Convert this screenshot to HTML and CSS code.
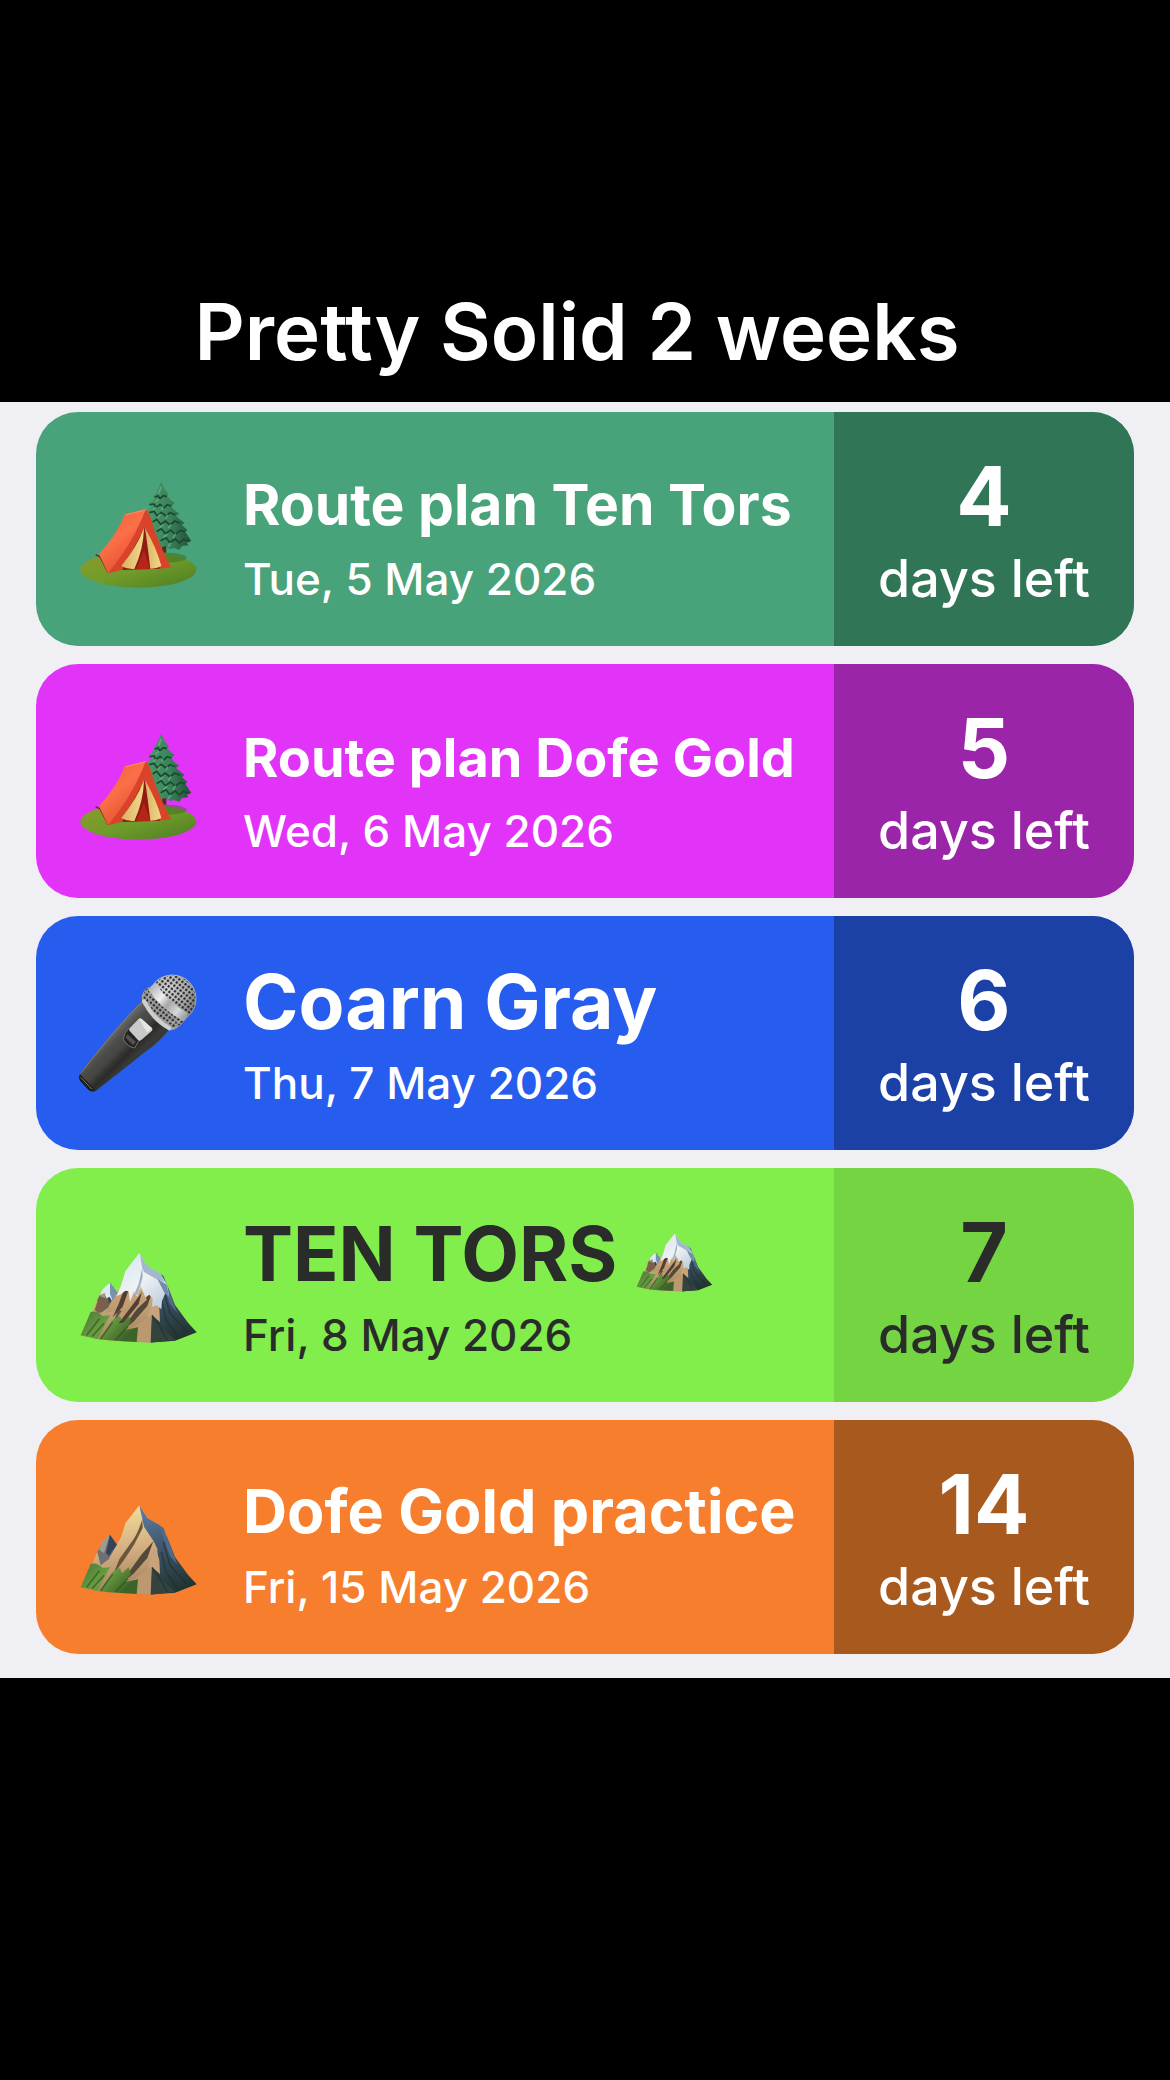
FILE: index.html
```
<!DOCTYPE html>
<html lang="en">

<head>
  <meta charset="UTF-8">
  <meta name="viewport" content="width=device-width, initial-scale=1">
  <title>Pretty Solid 2 weeks</title>
  <link rel="stylesheet" href="styles.css">
</head>

<body>

  <!-- shared icon shapes -->
  <svg class="sprite" width="0" height="0" aria-hidden="true">
    <defs>
      <linearGradient id="grass" x1="0" y1="0" x2="1" y2="1">
        <stop offset="0" stop-color="#8f9a2c"/>
        <stop offset=".5" stop-color="#6f9c2a"/>
        <stop offset="1" stop-color="#4d7d22"/>
      </linearGradient>
      <linearGradient id="canvas" x1="0" y1="0" x2=".6" y2="1">
        <stop offset="0" stop-color="#ee5a34"/>
        <stop offset=".5" stop-color="#fb7049"/>
        <stop offset="1" stop-color="#e24a2a"/>
      </linearGradient>
      <linearGradient id="flap" x1="0" y1="0" x2="1" y2="0">
        <stop offset="0" stop-color="#d9b262"/>
        <stop offset="1" stop-color="#f3d98a"/>
      </linearGradient>
      <linearGradient id="fir" x1="0" y1="0" x2="1" y2="0">
        <stop offset="0" stop-color="#4c9a6b"/>
        <stop offset=".5" stop-color="#3a8359"/>
        <stop offset="1" stop-color="#1f4f38"/>
      </linearGradient>

      <linearGradient id="handle" gradientUnits="userSpaceOnUse" x1="145" y1="225" x2="215" y2="295">
        <stop offset="0" stop-color="#6b6b68"/>
        <stop offset=".3" stop-color="#4c4c4a"/>
        <stop offset=".55" stop-color="#454542"/>
        <stop offset=".8" stop-color="#2a2a29"/>
        <stop offset="1" stop-color="#383836"/>
      </linearGradient>
      <radialGradient id="grille" cx=".4" cy=".3" r=".75">
        <stop offset="0" stop-color="#d8d8d8"/>
        <stop offset=".6" stop-color="#a9a9a9"/>
        <stop offset="1" stop-color="#6d6d6d"/>
      </radialGradient>
      <linearGradient id="ring" gradientUnits="userSpaceOnUse" x1="275" y1="80" x2="385" y2="170">
        <stop offset="0" stop-color="#b5b5b5"/>
        <stop offset=".3" stop-color="#efefef"/>
        <stop offset=".5" stop-color="#a5a8a8"/>
        <stop offset=".75" stop-color="#d5d8d8"/>
        <stop offset="1" stop-color="#8f9292"/>
      </linearGradient>
      <pattern id="mesh" width="12" height="12" patternUnits="userSpaceOnUse" patternTransform="rotate(38)">
        <rect x="2" y="2" width="7" height="7" rx="2" fill="#2b2b2b"/>
      </pattern>

      <linearGradient id="rock" gradientUnits="userSpaceOnUse" x1="200" y1="80" x2="200" y2="335">
        <stop offset="0" stop-color="#d9b489"/>
        <stop offset=".55" stop-color="#c49d72"/>
        <stop offset="1" stop-color="#8d8a5a"/>
      </linearGradient>
      <linearGradient id="rockSun" gradientUnits="userSpaceOnUse" x1="200" y1="70" x2="240" y2="300">
        <stop offset="0" stop-color="#f3df98"/>
        <stop offset=".5" stop-color="#d8b384"/>
        <stop offset="1" stop-color="#a88a62"/>
      </linearGradient>
      <linearGradient id="shade" gradientUnits="userSpaceOnUse" x1="280" y1="90" x2="370" y2="320">
        <stop offset="0" stop-color="#58779a"/>
        <stop offset=".5" stop-color="#3c5163"/>
        <stop offset="1" stop-color="#20342f"/>
      </linearGradient>
      <linearGradient id="snow" gradientUnits="userSpaceOnUse" x1="200" y1="90" x2="300" y2="210">
        <stop offset="0" stop-color="#dbe9f1"/>
        <stop offset=".5" stop-color="#eef1f4"/>
        <stop offset="1" stop-color="#c6d4e1"/>
      </linearGradient>
      <linearGradient id="moss" gradientUnits="userSpaceOnUse" x1="80" y1="240" x2="180" y2="340">
        <stop offset="0" stop-color="#4f7a38"/>
        <stop offset=".5" stop-color="#6ba040"/>
        <stop offset="1" stop-color="#3d6428"/>
      </linearGradient>
    </defs>

    <symbol id="camping" viewBox="54 27 360 360">
      <ellipse cx="235" cy="329" rx="174" ry="54" fill="url(#grass)"/>
      <ellipse cx="318" cy="293" rx="62" ry="15" fill="#3c6a20" opacity=".5"/>
      <rect x="306" y="250" width="13" height="28" fill="#4b3426"/>
      <!-- tree -->
      <path fill="url(#fir)" d="M304 64L314 88L326 103L322 108L334 122L344 128L337 136L335 142L348 155L358 160L348 168L362 180L373 188L366 196L382 210L376 216L394 243L380 247L385 256L366 258L358 270L342 264L330 268L318 258L302 262L286 240L262 150L276 138L266 133L284 114L278 110L290 96Z"/>
      <g fill="none" stroke="#1c4532" stroke-width="5" stroke-linejoin="round">
        <path d="M284 112L294 107L300 116L310 107L320 110"/>
        <path d="M268 134L282 132L288 143L300 133L312 143L322 134L334 138"/>
        <path d="M268 158L282 154L292 168L304 157L318 168L330 158L346 164"/>
        <path d="M278 186L290 178L302 193L316 183L330 195L344 183L360 190"/>
        <path d="M290 215L304 206L316 221L332 210L346 223L360 211L374 216"/>
        <path d="M302 242L318 233L330 248L346 237L358 249L370 238L388 245"/>
      </g>
      <g fill="none" stroke="#65b186" stroke-width="5" stroke-linecap="round" opacity=".8">
        <path d="M303 82L297 99M288 124L296 119M280 148L288 143M306 148L308 140M294 172L300 164M318 174L322 166M300 202L308 196M326 203L332 195M312 231L320 224M340 232L346 223M326 258L332 250"/>
      </g>
      <!-- tent -->
      <path d="M107 284L120 290L145 338" fill="none" stroke="#6b3420" stroke-width="5"/>
      <path fill="url(#canvas)" d="M258 147L194 163Q172 222 117 283L144 340Q196 290 236 210Z"/>
      <path fill="#d8432a" d="M258 147L269 164Q290 240 333 322L300 326L253 204Q228 260 184 330L144 340Q210 260 244 180Z"/>
      <path fill="#8f1b14" d="M253 204L300 326L186 330Z"/>
      <path fill="#b52618" d="M252 270L270 326L228 328Z"/>
      <path fill="url(#flap)" d="M252 204Q230 262 184 318Q202 329 223 327Q250 270 252 204Z"/>
      <path fill="url(#flap)" d="M255 204Q290 265 304 318Q288 327 271 326Q264 265 255 204Z"/>
      <path fill="none" stroke="#ff9a70" stroke-width="3" opacity=".7" d="M258 149L196 165"/>
    </symbol>

    <symbol id="microphone" viewBox="54 39 360 360">
      <path fill="url(#handle)" d="M246 124L326 210Q300 245 250 280Q170 345 108 392Q98 398 86 390L60 362Q54 352 60 340Q120 260 192 180Q232 135 246 124Z"/>
      <path fill="none" stroke="#8a8a86" stroke-width="3" opacity=".7" d="M244 128Q180 190 62 340"/>
      <path fill="#1d1d1c" d="M60 343L106 391Q96 398 86 390L60 362Q54 352 60 343Z"/>
      <path fill="none" stroke="#777" stroke-width="3" d="M62 352L96 388"/>
      <path fill="#232323" stroke="#77756f" stroke-width="3" stroke-linejoin="round" d="M206 205L238 240L224 264Q204 262 190 238Q190 222 206 205Z"/>
      <path fill="#55504d" d="M202 222L228 246L219 255L197 233Z"/>
      <path fill="#c9c9c9" d="M236 176Q240 173 244 176L276 204Q279 208 276 212L243 241Q238 244 234 240L209 213Q206 209 209 205Z"/>
      <path fill="#e6e6e6" d="M237 176L244 176L276 205L262 218Z"/>
      <circle cx="337" cy="116" r="72" fill="url(#grille)"/>
      <circle cx="337" cy="116" r="70" fill="url(#mesh)"/>
      <path fill="#9d9d9d" d="M266 80Q238 98 248 130Q276 186 328 211Q352 212 378 176Z"/>
      <path fill="url(#mesh)" d="M266 80Q242 100 254 124Q290 176 334 202Q356 204 378 176Z"/>
      <path fill="url(#ring)" d="M288 70Q270 76 266 91Q300 145 371 184Q382 172 386 160Q324 130 288 70Z"/>
      <path fill="none" stroke="#cfd0d0" stroke-width="12" stroke-linecap="round" d="M252 124Q282 178 328 205"/>
      <circle cx="337" cy="116" r="71" fill="none" stroke="#bdbdbd" stroke-width="3" opacity=".6"/>
    </symbol>

    <!-- bare ridge, the snowy one draws over it -->
    <symbol id="ridge" viewBox="54 -15 360 360">
      <path fill="url(#rockSun)" d="M62 316L92 256L118 196Q124 178 150 158L170 188L184 164L196 124L238 70L262 108L300 130L322 166L345 225L385 280L410 307L345 332Q270 342 160 332L115 328Z"/>
      <path fill="#6d6f72" d="M150 158L170 188L146 232L122 250L112 210Q124 180 150 158Z"/>
      <path fill="#a09a8c" d="M150 158Q124 176 118 204L132 214Z"/>
      <path fill="#34435a" d="M150 158L171 188L146 222L138 212Z"/>
      <path fill="url(#shade)" d="M238 70L262 108L300 130L322 166L345 225L385 280L410 307L345 332L274 337L276 256L296 268L292 200L280 176L252 134Z"/>
      <path fill="#506a88" d="M296 128L311 138L320 164L352 248L330 222Z"/>
      <path fill="#6b553f" d="M247 112L248 138L222 188L196 228L172 262L160 276L178 232L212 184Q232 160 247 112Z"/>
      <path fill="#54483b" d="M280 178L262 228L222 274L166 322L158 322L200 280L244 218Z"/>
      <path fill="#c9a37a" d="M286 194L298 234L300 276L276 256L262 262L274 226Z"/>
      <path fill="#bb9870" d="M274 256L272 338L178 332L214 296Z"/>
      <path fill="#33443f" d="M276 256L308 296L346 330L272 338Z"/>
      <path fill="none" stroke="#1f2f33" stroke-width="5" opacity=".6" d="M310 180L330 250L380 304M304 210L318 270L354 322M276 256L300 290L322 330"/>
      <path fill="url(#moss)" d="M62 316L92 246Q110 240 128 258L150 256L112 327ZM118 328L160 268L180 258L186 274L206 256L212 276L196 300L234 292L230 336L150 331Z"/>
      <path fill="none" stroke="#2d4b23" stroke-width="5" opacity=".6" d="M80 316L118 266M122 326L158 276M166 330L204 290M96 320L132 280"/>
    </symbol>

    <symbol id="mountain" viewBox="54 -15 360 360">
      <use href="#ridge" x="54" y="-15" width="360" height="360"/>
      <path fill="#7a5f49" d="M118 198L146 208L146 230L116 250L104 240Z"/>
      <path fill="url(#rock)" d="M176 180L134 250L180 240L204 262L260 210L254 180Z"/>
      <path fill="#4f3f37" d="M206 180L188 230L158 262L176 222L190 184ZM246 186L236 222L190 278L176 280L218 224Z"/>
      <path fill="url(#snow)" d="M238 70L262 108L300 130L322 166L328 200L316 190L306 212L304 238L290 226L276 230L278 206L268 194L256 202L242 168L232 200L222 186L210 216L206 184L196 182L184 192L170 198L184 164L196 124Z"/>
      <path fill="#a3b8cb" d="M240 74L262 108L300 130L314 156L290 148L252 126L246 110Z"/>
      <path fill="#9bb0c4" d="M247 112L248 142L232 196L224 190L236 162Z"/>
      <path fill="#6f8dab" d="M292 146L320 164L328 200L314 190Z"/>
      <path fill="#dfe9f0" d="M150 158Q124 176 120 196L134 188L140 206L148 200L156 212L168 188Z"/>
      <path fill="#7592b5" d="M150 158L170 188L158 212L150 192Z"/>
    </symbol>
  </svg>

  <header class="page-header">
    <h1 class="page-header__title">Pretty Solid 2 weeks</h1>
  </header>

  <main class="countdowns">
    <ul class="countdowns__list">

      <li class="card card--green">
        <div class="card__body">
          <svg class="card__icon" aria-hidden="true"><use href="#camping"/></svg>
          <div class="card__text">
            <h2 class="card__title"><span class="card__name card__name--longer">Route plan Ten Tors</span></h2>
            <time class="card__date" datetime="2026-05-05">Tue, 5 May 2026</time>
          </div>
        </div>
        <div class="card__count">
          <span class="card__number">4</span>
          <span class="card__unit">days left</span>
        </div>
      </li>

      <li class="card card--pink">
        <div class="card__body">
          <svg class="card__icon" aria-hidden="true"><use href="#camping"/></svg>
          <div class="card__text">
            <h2 class="card__title"><span class="card__name card__name--longest">Route plan Dofe Gold</span></h2>
            <time class="card__date" datetime="2026-05-06">Wed, 6 May 2026</time>
          </div>
        </div>
        <div class="card__count">
          <span class="card__number">5</span>
          <span class="card__unit">days left</span>
        </div>
      </li>

      <li class="card card--blue">
        <div class="card__body">
          <svg class="card__icon" aria-hidden="true"><use href="#microphone"/></svg>
          <div class="card__text">
            <h2 class="card__title"><span class="card__name">Coarn Gray</span></h2>
            <time class="card__date" datetime="2026-05-07">Thu, 7 May 2026</time>
          </div>
        </div>
        <div class="card__count">
          <span class="card__number">6</span>
          <span class="card__unit">days left</span>
        </div>
      </li>

      <li class="card card--lime">
        <div class="card__body">
          <svg class="card__icon" aria-hidden="true"><use href="#mountain"/></svg>
          <div class="card__text">
            <h2 class="card__title"><span class="card__name">TEN TORS <svg class="card__emoji" aria-hidden="true"><use href="#mountain"/></svg></span></h2>
            <time class="card__date" datetime="2026-05-08">Fri, 8 May 2026</time>
          </div>
        </div>
        <div class="card__count">
          <span class="card__number">7</span>
          <span class="card__unit">days left</span>
        </div>
      </li>

      <li class="card card--orange">
        <div class="card__body">
          <svg class="card__icon" aria-hidden="true"><use href="#ridge"/></svg>
          <div class="card__text">
            <h2 class="card__title"><span class="card__name card__name--long">Dofe Gold practice</span></h2>
            <time class="card__date" datetime="2026-05-15">Fri, 15 May 2026</time>
          </div>
        </div>
        <div class="card__count">
          <span class="card__number">14</span>
          <span class="card__unit">days left</span>
        </div>
      </li>

    </ul>
  </main>

</body>

</html>
```
FILE: styles.css
```
* {
  box-sizing: border-box;
}

body {
  margin: 0;
  background: #000;
  color: #fff;
  font-family: Inter, "Liberation Sans", sans-serif;
}

h1, h2, ul {
  margin: 0;
  padding: 0;
}

.sprite {
  position: absolute;
}

.page-header {
  padding: 282px 16px 20px 0;
  text-align: center;
}

.page-header__title {
  font-size: 78px;
  font-weight: 600;
  line-height: 100px;
}

.countdowns {
  padding: 10px 36px 24px;
  background: #efeff4;
}

.countdowns__list {
  display: grid;
  gap: 18px;
  list-style: none;
}

.card {
  display: grid;
  grid-template-columns: 1fr 300px;
  border-radius: 42px;
  overflow: hidden;
  white-space: nowrap;
}

.card__body {
  display: flex;
  align-items: center;
  gap: 45px;
  padding: 40px 0 40px 42px;
}

.card__icon {
  flex: none;
  width: 120px;
  height: 120px;
}

/* the big font stays on the heading so every name sits on the same baseline */
.card__title {
  margin-bottom: 8px;
  font-size: 75px;
  font-weight: 700;
  line-height: 92px;
}

.card__name {
  line-height: 1;
}

.card__name--long {
  font-size: 61px;
}

.card__name--longer {
  font-size: 57px;
}

.card__name--longest {
  font-size: 54px;
}

.card__emoji {
  width: 78px;
  height: 78px;
  vertical-align: -12px;
}

.card__date {
  display: block;
  font-size: 44px;
  font-weight: 500;
  line-height: 54px;
}

.card__count {
  display: flex;
  flex-direction: column;
  justify-content: center;
  gap: 4px;
  padding-top: 4px;
  text-align: center;
}

.card__number {
  font-size: 82px;
  font-weight: 700;
  line-height: 92px;
}

.card__unit {
  font-size: 52px;
  font-weight: 500;
  line-height: 64px;
}

.card--green {
  background: #48a37a;
}

.card--green .card__count {
  background: #2f7556;
}

.card--pink {
  background: #e233f8;
}

.card--pink .card__count {
  background: #9b25a8;
}

.card--blue {
  background: #265dee;
}

.card--blue .card__count {
  background: #1b40a6;
}

.card--lime {
  background: #81ee4b;
  color: #2a2c2a;
}

.card--lime .card__count {
  background: #75d442;
}

.card--orange {
  background: #f77e2d;
}

.card--orange .card__count {
  background: #a8591e;
}
```
